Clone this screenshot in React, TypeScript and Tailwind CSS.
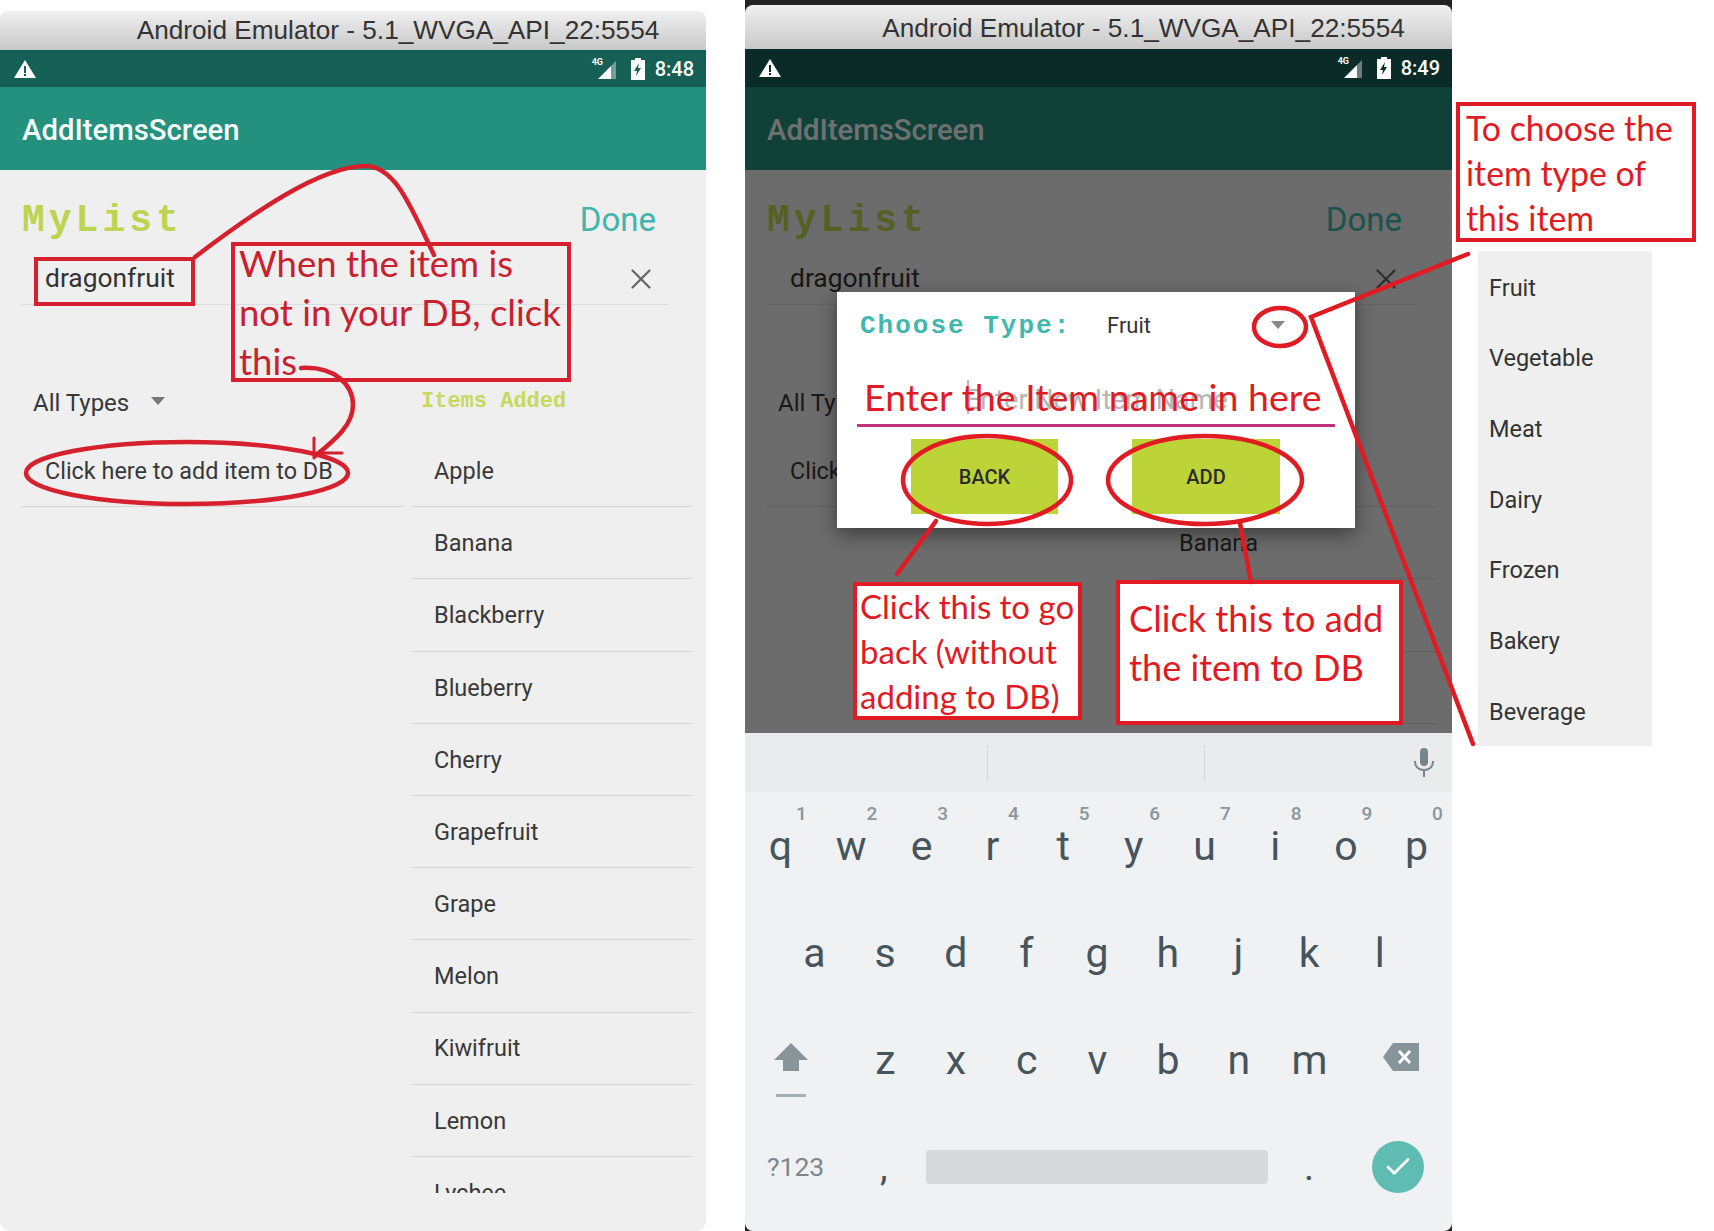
import React from 'react';
import { Check, X } from 'lucide-react';

const items = ['Apple', 'Banana', 'Blackberry', 'Blueberry', 'Cherry', 'Grapefruit', 'Grape', 'Melon', 'Kiwifruit', 'Lemon', 'Lychee'];
const types = ['Fruit', 'Vegetable', 'Meat', 'Dairy', 'Frozen', 'Bakery', 'Beverage'];
const topRow = ['q', 'w', 'e', 'r', 't', 'y', 'u', 'i', 'o', 'p'];
const midRow = ['a', 's', 'd', 'f', 'g', 'h', 'j', 'k', 'l'];
const lowRow = ['z', 'x', 'c', 'v', 'b', 'n', 'm'];

const roboto = "font-['Roboto',sans-serif]";
const mono = "font-['Liberation_Mono',monospace]";
const note = "font-['Lato',sans-serif]";

function StatusBar({ time, dim }: { time: string; dim?: boolean }) {
  return (
    <div className={`flex h-[37px] shrink-0 items-center justify-between pl-[13px] pr-[12px] text-white ${dim ? 'h-[38px] bg-[#0a2b27]' : 'bg-[#155f54]'}`}>
      <svg width="24" height="20" viewBox="0 0 24 20">
        <path d="M12 1 23 19H1Z" fill="#fff" />
        <path d="M11 7h2v7h-2zM11 15h2v2h-2z" fill={dim ? '#0a2b27' : '#155f54'} />
      </svg>
      <div className={`flex items-center ${roboto}`}>
        <div className="relative h-[22px] w-[26px]">
          <svg width="26" height="22" viewBox="0 0 26 22" className="absolute inset-0">
            <path d="M6 21 19 8v13Z" fill="#fff" />
            <path d="M19 8l5-5v18h-5Z" fill="#ffffff66" />
          </svg>
          <span className="absolute left-0 top-[-2px] text-[9px] font-bold leading-[12px]">4G</span>
        </div>
        <svg width="14" height="22" viewBox="0 0 14 22" className="ml-[13px] mr-[10px]">
          <path d="M4 0h6v2h4v20H0V2h4Z" fill="#fff" />
          <path d="M8 5 3 13h3l-1 5 5-8H7Z" fill={dim ? '#0a2b27' : '#155f54'} />
        </svg>
        <span className="text-[20px] font-medium leading-none">{time}</span>
      </div>
    </div>
  );
}

function ListRow({ label }: { label: string }) {
  return (
    <div className="flex h-[72.2px] shrink-0 items-center border-b border-[#d6d6d6] pl-[23px] pt-[2px] text-[23.5px] text-[#383838]">
      {label}
    </div>
  );
}

function AppScreen() {
  return (
    <>
      <div className={`flex h-[83px] shrink-0 items-center bg-[#24917f] pl-[22px] pt-[4px] text-[29.3px] font-medium text-[#f4faf8] shadow-[0_2px_4px_rgba(0,0,0,0.25)] ${roboto}`}>
        AddItemsScreen
      </div>
      <div className={`min-h-0 flex-1 overflow-hidden bg-[#efefef] ${roboto}`}>
        <div className="mt-[26px] flex h-[48px] items-center justify-between pl-[22px] pr-[50px]">
          <span className={`text-[38px] font-bold tracking-[4px] text-[#bdd44f] ${mono}`}>MyList</span>
          <span className="text-[33px] text-[#3fb5ad]">Done</span>
        </div>
        <div className="ml-[22px] flex h-[61px] w-[647px] items-center justify-between border-b border-[#dcdcdc] pl-[23px] pr-[11px] pt-[9px] text-[26.4px] text-[#333]">
          <span>dragonfruit</span>
          <X size={34} strokeWidth={1.6} className="text-[#666]" />
        </div>
        <div className="flex">
          <div className="ml-[22px] w-[382px]">
            <div className="flex h-[130px] items-start pl-[11px] pt-[78px] text-[24px] leading-[40px] text-[#383838]">
              All Types
              <span className="ml-[22px] mt-[14px] h-0 w-0 border-x-[7px] border-t-[8px] border-x-transparent border-t-[#777]" />
            </div>
            <div className="flex h-[72.2px] items-center border-b border-[#d6d6d6] pl-[23px] pt-[2px] text-[23.4px] text-[#383838]">
              Click here to add item to DB
            </div>
          </div>
          <div className="ml-[7px] w-[281px]">
            <div className={`h-[130px] pl-[10px] pt-[77px] text-[22px] font-bold leading-[40px] text-[#c5d95e] ${mono}`}>
              Items Added
            </div>
            <div className="flex h-[758px] flex-col overflow-hidden">
              {items.map((item) => (
                <ListRow key={item} label={item} />
              ))}
            </div>
          </div>
        </div>
      </div>
    </>
  );
}

function TitleBar({ height }: { height: string }) {
  return (
    <div className={`flex shrink-0 items-center justify-center rounded-t-[8px] bg-gradient-to-b from-[#f0f0f0] to-[#c8c8c8] pl-[90px] text-[26.2px] text-[#333] font-['Liberation_Sans',sans-serif] ${height}`}>
      Android Emulator - 5.1_WVGA_API_22:5554
    </div>
  );
}

function Modal() {
  return (
    <div className={`absolute left-[92px] top-[205px] h-[236px] w-[518px] bg-white shadow-[0_6px_18px_rgba(0,0,0,0.45)] ${roboto}`}>
      <div className="flex h-[66px] items-center">
        <span className={`ml-[23px] w-[247px] pt-[3px] text-[26px] font-bold tracking-[2px] text-[#3fb8ae] ${mono}`}>Choose Type:</span>
        <span className="text-[22px] text-[#333]">Fruit</span>
        <span className="ml-[120px] h-0 w-0 border-x-[7px] border-t-[8px] border-x-transparent border-t-[#888]" />
      </div>
      <div className="relative mx-[20px] mt-[10px] flex h-[59px] items-center border-b-[3px] border-[#c2317c] pl-[108px] pt-[8px] text-[27px] text-[#b5b5b5]">
        <span className="absolute left-[110px] top-[12px] h-[34px] w-[2px] bg-[#e5a0c0]" />
        Enter New Item Name
      </div>
      <div className="mt-[12px] flex text-[20px] font-medium text-[#2b2b2b]">
        <div className="ml-[74px] flex h-[75px] w-[147px] items-center justify-center bg-[#bcd437]">BACK</div>
        <div className="ml-[74px] flex h-[75px] w-[148px] items-center justify-center bg-[#bcd437]">ADD</div>
      </div>
    </div>
  );
}

function KeyLetter({ label, hint }: { label: string; hint?: string }) {
  return (
    <div className="relative flex h-full w-[70.7px] shrink-0 items-center justify-center text-[41px] text-[#46545c]">
      {hint && <span className="absolute right-[9px] top-[-2px] text-[19px] font-medium text-[#8a969c]">{hint}</span>}
      {label}
    </div>
  );
}

function Keyboard() {
  return (
    <div className={`h-[498px] shrink-0 bg-[#eff1f3] ${roboto}`}>
      <div className="flex h-[59px] items-center bg-[#e9ebec]">
        <span className="ml-[242px] h-[36px] w-px bg-[#d5d7d9]" />
        <span className="ml-[216px] h-[36px] w-px bg-[#d5d7d9]" />
        <svg width="24" height="30" viewBox="0 0 24 30" className="ml-[207px]">
          <rect x="8" y="0" width="8" height="18" rx="4" fill="#77858b" />
          <path d="M3 13c0 6 4 9 9 9s9-3 9-9M12 22v7" stroke="#77858b" strokeWidth="2" fill="none" />
        </svg>
      </div>
      <div className="mt-[10px] flex h-[90px] items-center pr-[2px]">
        {topRow.map((k, i) => (
          <KeyLetter key={k} label={k} hint={String((i + 1) % 10)} />
        ))}
      </div>
      <div className="mt-[17px] flex h-[90px] items-center pl-[34px]">
        {midRow.map((k) => (
          <KeyLetter key={k} label={k} />
        ))}
      </div>
      <div className="mt-[17px] flex h-[90px] items-center">
        <div className="flex w-[105px] flex-col items-center pb-[2px] pr-[13px] pt-[20px]">
          <svg width="34" height="28" viewBox="0 0 34 28">
            <path d="M17 0 34 17H25V28H9V17H0Z" fill="#87959b" />
          </svg>
          <span className="mt-[23px] h-[3px] w-[30px] bg-[#a5afb4]" />
        </div>
        {lowRow.map((k) => (
          <KeyLetter key={k} label={k} />
        ))}
        <svg width="36" height="28" viewBox="0 0 36 28" className="mb-[8px] ml-[38px]">
          <path d="M10 0H36V28H10L0 14Z" fill="#87959b" />
          <path d="M16 8 27 20M27 8 16 20" stroke="#fff" strokeWidth="3" />
        </svg>
      </div>
      <div className="mt-[26px] flex h-[70px] items-center text-[#7b878d]">
        <span className="w-[98px] pl-[22px] text-[26.5px]">?123</span>
        <span className="w-[83px] pl-[37px] text-[38px] leading-none text-[#46545c]">,</span>
        <span className="h-[34px] w-[342px] rounded-[4px] bg-[#d7dadc]" />
        <span className="w-[104px] pl-[36px] text-[38px] leading-none text-[#46545c]">.</span>
        <span className="flex h-[52px] w-[52px] items-center justify-center rounded-full bg-[#5fbcb2]">
          <Check size={30} strokeWidth={2.25} className="text-white" />
        </span>
      </div>
    </div>
  );
}

function Note({ className, children }: { className: string; children?: React.ReactNode }) {
  return <div className={`absolute border-[4px] ${note} ${className}`}>{children}</div>;
}

function Marks() {
  return (
    <svg width="1714" height="1231" viewBox="0 0 1714 1231" fill="none" className="pointer-events-none absolute inset-0">
      <g stroke="#d7202e" strokeWidth="4.5" strokeLinecap="round">
        <path d="M195 257C250 215 320 166 365 166C395 166 410 205 434 255" />
        <path d="M301 368C335 366 353 385 353 405C353 425 335 440 315 456" />
        <path d="M317 453H342M314 438V458" strokeWidth="3" />
        <ellipse cx="187" cy="473" rx="161" ry="31" />
      </g>
      <g stroke="#e01b24" strokeWidth="4.5" strokeLinecap="round">
        <path d="M1468 254 1311 317 1473 744" />
        <path d="M936 521 897 574" />
        <path d="M1240 523 1251 582" />
        <ellipse cx="1280" cy="327" rx="26" ry="19" />
        <ellipse cx="987" cy="480" rx="84" ry="44" />
        <ellipse cx="1205" cy="480" rx="97" ry="44" />
      </g>
    </svg>
  );
}

export default function App() {
  return (
    <div className="relative flex h-[1231px] w-[1714px] items-start overflow-hidden bg-white">
      {/* Left emulator */}
      <div className="mt-[11px] flex h-[1220px] w-[706px] shrink-0 flex-col overflow-hidden rounded-b-[10px]">
        <TitleBar height="h-[39px]" />
        <StatusBar time="8:48" />
        <AppScreen />
      </div>

      {/* Right emulator with the dialog open */}
      <div className="ml-[39px] h-[1231px] w-[707px] shrink-0 bg-[#222] pt-[5px]">
        <div className="flex h-[1226px] flex-col overflow-hidden rounded-b-[8px]">
          <TitleBar height="h-[44px] pt-[3px]" />
          <StatusBar time="8:49" dim />
          <div className="relative flex min-h-0 flex-1 flex-col">
            <AppScreen />
            <div className="absolute inset-0 bg-black/55" />
            <Modal />
          </div>
          <Keyboard />
        </div>
      </div>

      {/* Right side type list */}
      <div className="ml-[4px] mt-[102px] flex w-[240px] shrink-0 flex-col">
        <div className={`h-[140px] border-[4px] border-[#e01b24] pl-[6px] text-[33.8px] leading-[45px] text-[#e01b24] ${note}`}>
          To choose the
          <br />
          item type of
          <br />
          this item
        </div>
        <div className={`ml-[22px] mt-[9px] flex h-[495px] w-[174px] flex-col bg-[#efefef] pl-[11px] pt-[2px] text-[23.5px] text-[#333] ${roboto}`}>
          {types.map((t) => (
            <div key={t} className="flex h-[70.7px] shrink-0 items-center">
              {t}
            </div>
          ))}
        </div>
      </div>

      {/* Red annotations */}
      <Note className="left-[34px] top-[257px] h-[49px] w-[161px] border-[#d7202e]" />
      <Note className="left-[231px] top-[242px] h-[140px] w-[340px] border-[#d7202e] pl-[4px] text-[36.5px] leading-[49px] text-[#c9202e]">
        <div className="-mt-[7px]">
          When the item is
          <br />
          not in your DB, click
          <br />
          this
        </div>
      </Note>
      <div className={`absolute left-[864px] top-[374px] text-[37.5px] leading-[46px] text-[#e01b24] ${note}`}>
        Enter the Item name in here
      </div>
      <Note className="left-[853px] top-[582px] h-[138px] w-[229px] border-[#e01b24] bg-white pl-[3px] text-[33px] leading-[45px] text-[#e01b24]">
        <div className="-mt-[2px]">
          Click this to go
          <br />
          back (without
          <br />
          adding to DB)
        </div>
      </Note>
      <Note className="left-[1116px] top-[580px] h-[145px] w-[287px] border-[#e01b24] bg-white pl-[9px] pt-[10px] text-[36.2px] leading-[49px] text-[#e01b24]">
        Click this to add
        <br />
        the item to DB
      </Note>
      <Marks />
    </div>
  );
}
